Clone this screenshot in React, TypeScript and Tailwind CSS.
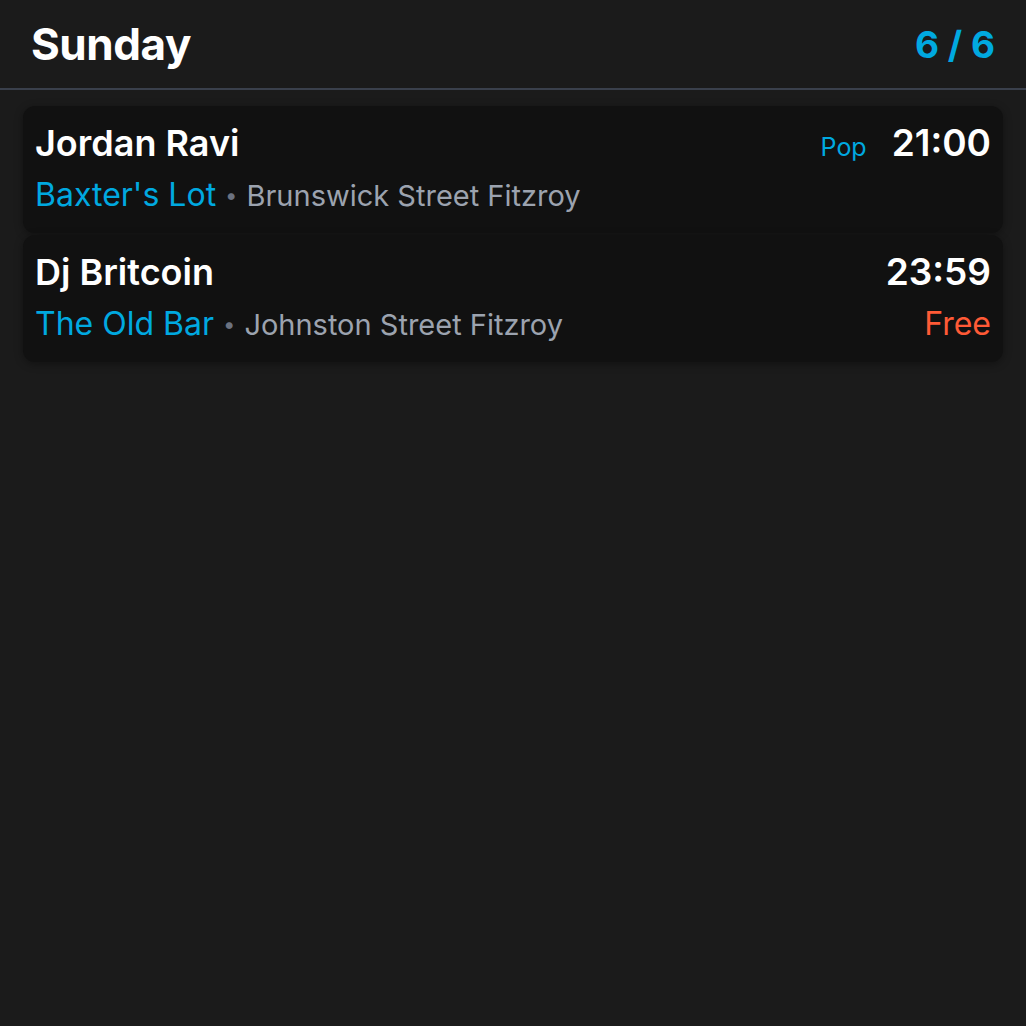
export default function App() {
  const events = [
    { name: 'Jordan Ravi', venue: "Baxter's Lot", address: 'Brunswick Street Fitzroy', genre: 'Pop', time: '21:00', price: '' },
    { name: 'Dj Britcoin', venue: 'The Old Bar', address: 'Johnston Street Fitzroy', genre: '', time: '23:59', price: 'Free' },
  ]

  return (
    <div className="min-h-screen w-full bg-[#1b1b1b] font-['Inter',sans-serif] text-white">
      {/* Header */}
      <div className="flex h-[90px] items-center justify-between border-b-2 border-[#3a404c] pl-[31px] pr-[31px]">
        <h1 className="text-[44px] font-bold leading-none tracking-[-0.01em]">Sunday</h1>
        <span className="text-[37px] font-bold leading-none text-[#00a9e0]">6 / 6</span>
      </div>

      {/* List */}
      <div className="flex flex-col gap-[2px] px-[23px] pt-[16px]">
        {events.map((e) => (
          <div key={e.name} className="flex h-[127px] flex-col justify-center gap-[18px] rounded-xl bg-[#111111] px-[12px] pb-[5px] shadow-[0_2px_8px_rgba(0,0,0,0.35)]">
            <div className="flex items-end justify-between">
              <span className="text-[36px] font-semibold leading-none">{e.name}</span>
              <div className="flex items-baseline gap-[25px]">
                {e.genre && <span className="text-[25px] leading-none text-[#00a9e0]">{e.genre}</span>}
                <span className="text-[37px] font-semibold leading-none">{e.time}</span>
              </div>
            </div>
            <div className="flex items-baseline justify-between">
              <div className="flex items-baseline leading-none">
                <span className="text-[32px] text-[#00a9e0]">{e.venue}</span>
                <span className="mx-[9px] self-center text-[22px] text-[#6b7280]">•</span>
                <span className="text-[29px] text-[#9ca3af]">{e.address}</span>
              </div>
              {e.price && <span className="text-[32px] leading-none text-[#ff5a36]">{e.price}</span>}
            </div>
          </div>
        ))}
      </div>
    </div>
  )
}
